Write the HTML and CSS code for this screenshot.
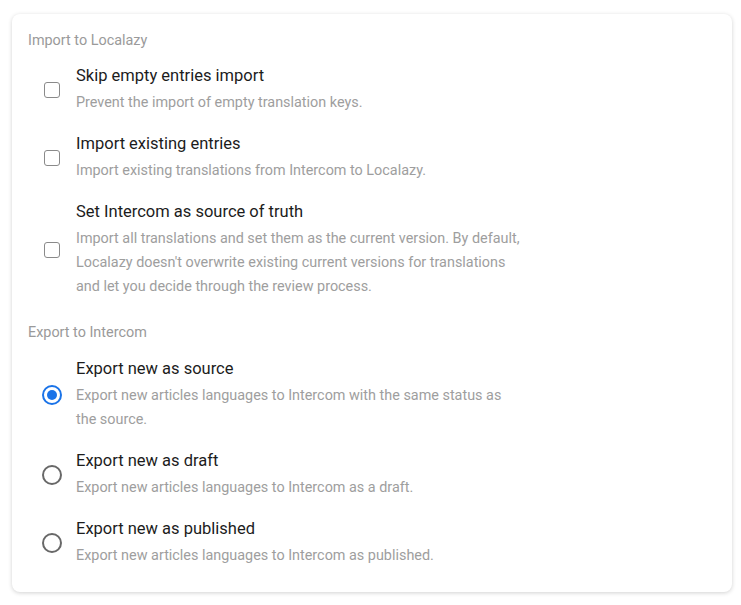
FILE: index.html
```html
<!DOCTYPE html>
<html lang="en">
<head>
<meta charset="utf-8">
<title>Intercom settings</title>
<link rel="stylesheet" href="styles.css">
</head>
<body>
<div class="card">
  <div class="section-label">Import to Localazy</div>
  <div class="options">
    <label class="option">
      <span class="control"><span class="checkbox"></span></span>
      <span class="text">
        <span class="title">Skip empty entries import</span>
        <span class="desc">Prevent the import of empty translation keys.</span>
      </span>
    </label>
    <label class="option">
      <span class="control"><span class="checkbox"></span></span>
      <span class="text">
        <span class="title">Import existing entries</span>
        <span class="desc">Import existing translations from Intercom to Localazy.</span>
      </span>
    </label>
    <label class="option">
      <span class="control"><span class="checkbox"></span></span>
      <span class="text">
        <span class="title">Set Intercom as source of truth</span>
        <span class="desc">Import all translations and set them as the current version. By default, Localazy doesn't overwrite existing current versions for translations and let you decide through the review process.</span>
      </span>
    </label>
  </div>
  <div class="section-label second">Export to Intercom</div>
  <div class="options second">
    <label class="option">
      <span class="control"><span class="radio checked"></span></span>
      <span class="text">
        <span class="title">Export new as source</span>
        <span class="desc">Export new articles languages to Intercom with the same status as the source.</span>
      </span>
    </label>
    <label class="option">
      <span class="control"><span class="radio"></span></span>
      <span class="text">
        <span class="title">Export new as draft</span>
        <span class="desc">Export new articles languages to Intercom as a draft.</span>
      </span>
    </label>
    <label class="option">
      <span class="control"><span class="radio"></span></span>
      <span class="text">
        <span class="title">Export new as published</span>
        <span class="desc">Export new articles languages to Intercom as published.</span>
      </span>
    </label>
  </div>
</div>
</body>
</html>
```
FILE: styles.css
```css
* { box-sizing: border-box; }
html, body { margin: 0; padding: 0; background: #fff; }
body {
  padding: 14px 9px 13px 12px;
  font-family: "Roboto", "Noto Sans", sans-serif;
}
.card {
  width: 720px;
  border-radius: 8px;
  background: #fff;
  box-shadow: 0 1px 4px rgba(0,0,0,0.18);
  padding: 15px 16px 24px 16px;
}
.section-label {
  font-size: 14.4px;
  line-height: 24px;
  color: #9a9a9a;
}
.section-label.second { margin-top: 22px; }
.options {
  display: flex;
  flex-direction: column;
  gap: 17px;
  margin-top: 11px;
}
.options.second { margin-top: 12px; }
.option {
  display: flex;
  align-items: center;
}
.control {
  width: 48px;
  flex: none;
  display: flex;
  justify-content: center;
}
.checkbox {
  width: 16px;
  height: 16px;
  border: 1px solid #8a8a8a;
  border-radius: 3px;
}
.radio {
  width: 20px;
  height: 20px;
  border: 2px solid #686868;
  border-radius: 50%;
  display: flex;
  align-items: center;
  justify-content: center;
}
.radio.checked { border-color: #1a73e8; }
.radio.checked::after {
  content: "";
  width: 10px;
  height: 10px;
  border-radius: 50%;
  background: #1a73e8;
}
.text {
  display: flex;
  flex-direction: column;
  width: 446px;
}
.title {
  font-size: 16.5px;
  line-height: 24px;
  color: #1c1c1c;
  margin-bottom: 3px;
}
.desc {
  font-size: 14.4px;
  line-height: 24px;
  color: #9e9e9e;
}
```
